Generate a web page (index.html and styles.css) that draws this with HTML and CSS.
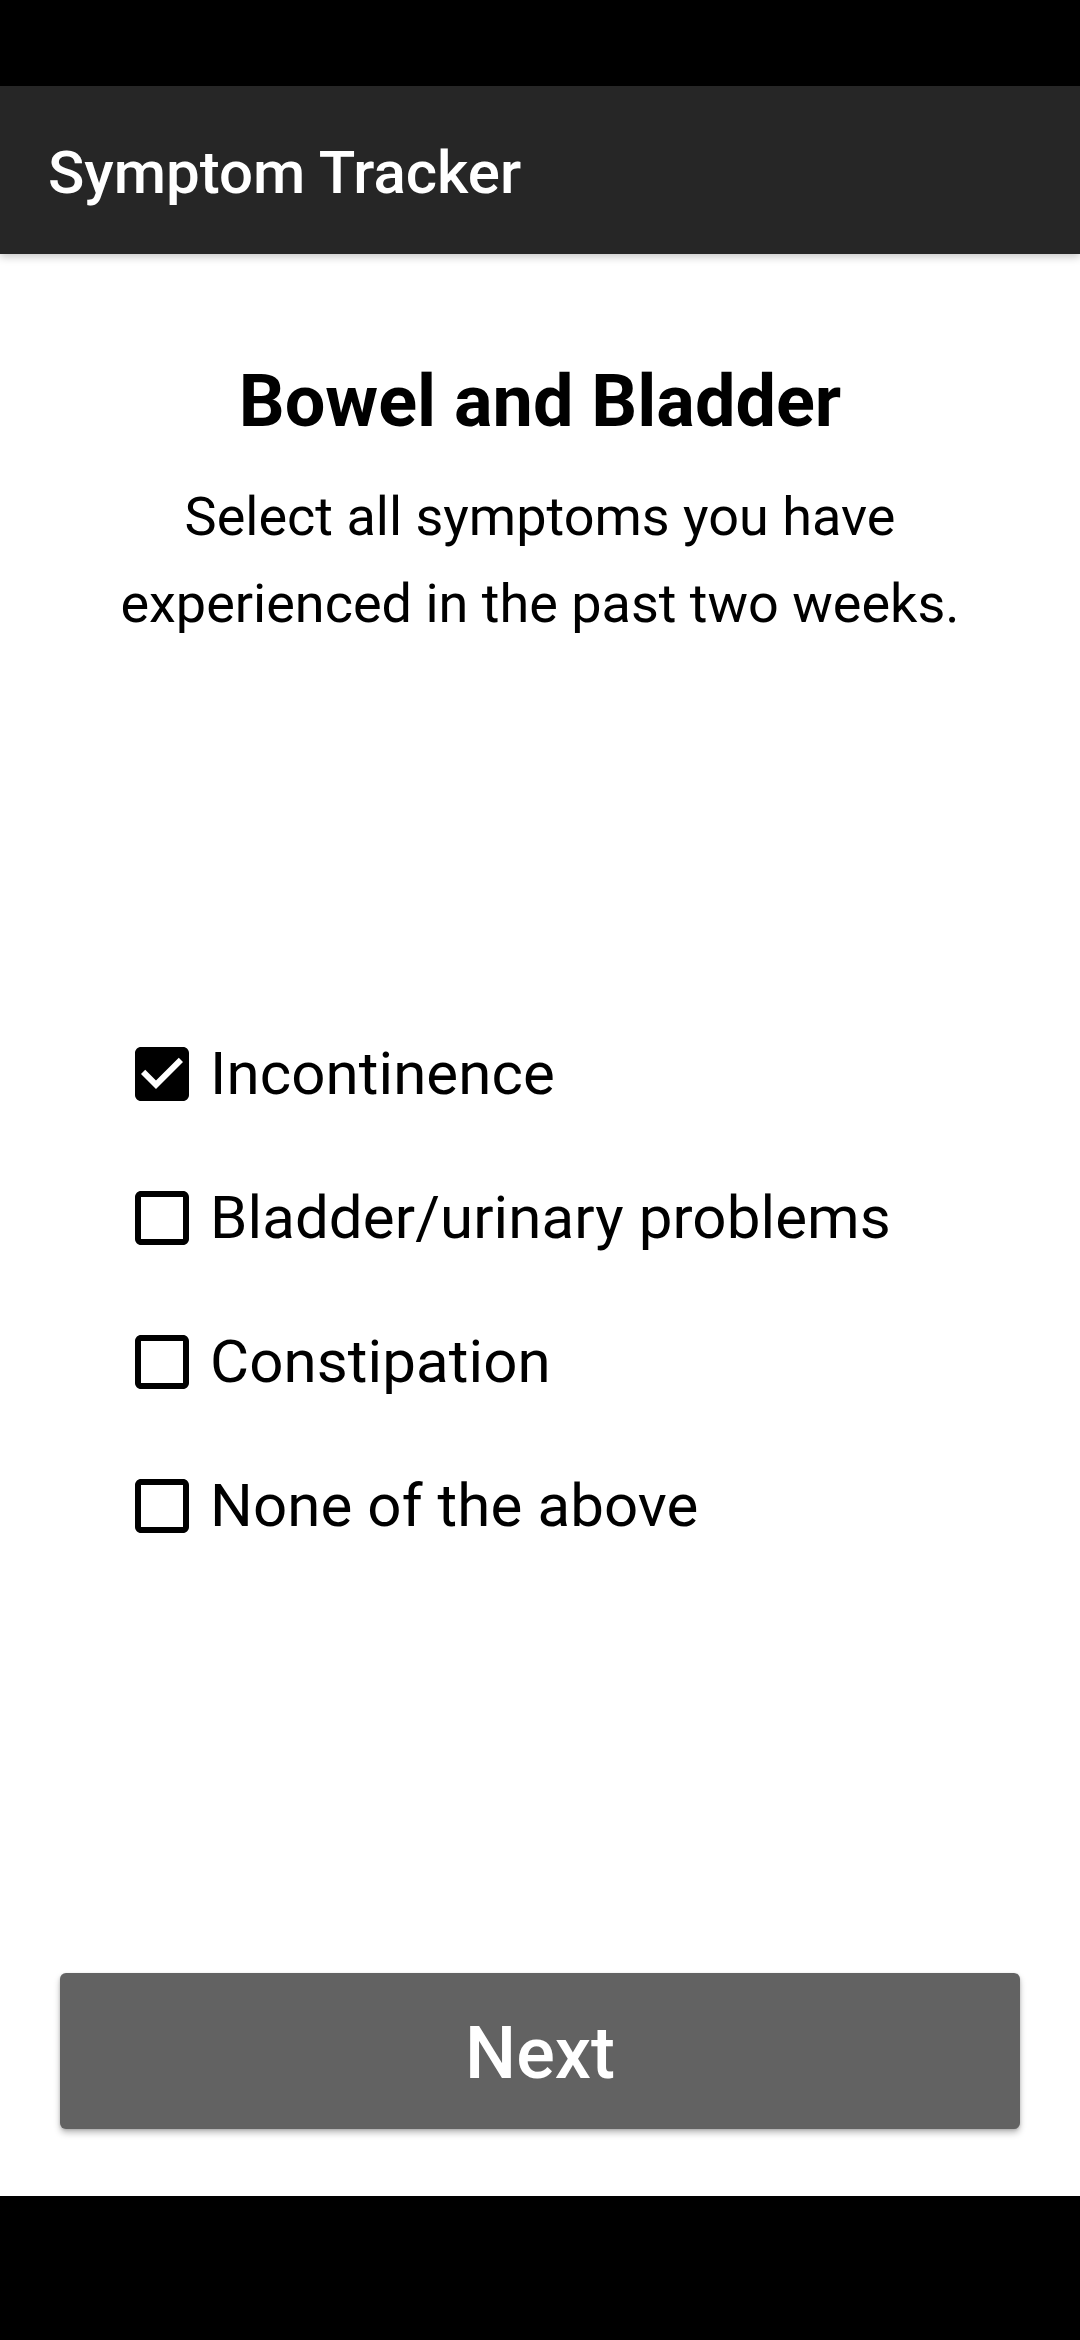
FILE: index.html
```html
<!DOCTYPE html>
<html lang="en">
<head>
<meta charset="utf-8">
<title>Symptom Tracker</title>
<link rel="stylesheet" href="styles.css">
</head>
<body>
<div class="screen">
  <div class="status-bar"></div>
  <header class="app-bar">
    <h1 class="app-title">Symptom Tracker</h1>
  </header>
  <main class="content">
    <h2 class="heading">Bowel and Bladder</h2>
    <p class="subtitle">Select all symptoms you have experienced in the past two weeks.</p>
    <ul class="options">
      <li class="option">
        <svg class="box" viewBox="0 0 24 24" width="72" height="72"><path d="M19 3H5c-1.11 0-2 .9-2 2v14c0 1.1.89 2 2 2h14c1.11 0 2-.9 2-2V5c0-1.1-.89-2-2-2zm-9 14l-5-5 1.41-1.41L10 14.17l7.59-7.59L19 8l-9 9z" fill="#000"/></svg>
        <span class="label">Incontinence</span>
      </li>
      <li class="option">
        <svg class="box" viewBox="0 0 24 24" width="72" height="72"><path d="M19 5v14H5V5h14m0-2H5c-1.1 0-2 .9-2 2v14c0 1.1.9 2 2 2h14c1.1 0 2-.9 2-2V5c0-1.1-.9-2-2-2z" fill="#000"/></svg>
        <span class="label">Bladder/urinary problems</span>
      </li>
      <li class="option">
        <svg class="box" viewBox="0 0 24 24" width="72" height="72"><path d="M19 5v14H5V5h14m0-2H5c-1.1 0-2 .9-2 2v14c0 1.1.9 2 2 2h14c1.1 0 2-.9 2-2V5c0-1.1-.9-2-2-2z" fill="#000"/></svg>
        <span class="label">Constipation</span>
      </li>
      <li class="option">
        <svg class="box" viewBox="0 0 24 24" width="72" height="72"><path d="M19 5v14H5V5h14m0-2H5c-1.1 0-2 .9-2 2v14c0 1.1.9 2 2 2h14c1.1 0 2-.9 2-2V5c0-1.1-.9-2-2-2z" fill="#000"/></svg>
        <span class="label">None of the above</span>
      </li>
    </ul>
    <button class="next-btn" type="button">Next</button>
  </main>
  <div class="nav-bar"></div>
</div>
</body>
</html>
```

FILE: styles.css
```css
html, body {
  margin: 0;
  padding: 0;
  background: #ffffff;
}

body {
  font-family: "Roboto", "Liberation Sans", sans-serif;
  color: #000000;
}

.screen {
  width: 1080px;
  height: 2340px;
  display: flex;
  flex-direction: column;
  overflow: hidden;
}

.status-bar {
  height: 86px;
  background: #000000;
  flex: none;
}

.app-bar {
  height: 168px;
  flex: none;
  background: #262626;
  display: flex;
  align-items: center;
  padding: 5px 48px 0;
  box-sizing: border-box;
  box-shadow: 0 3px 8px rgba(0, 0, 0, 0.22);
  position: relative;
  z-index: 2;
}

.app-title {
  margin: 0;
  font-size: 60px;
  font-weight: 500;
  color: #ffffff;
  line-height: 70px;
}

.content {
  flex: 1;
  display: flex;
  flex-direction: column;
  align-items: stretch;
  padding-top: 105px;
}

.heading {
  margin: 0;
  font-size: 72px;
  font-weight: 700;
  line-height: 86px;
  text-align: center;
}

.subtitle {
  margin: 28px 0 0;
  padding: 0 110px;
  font-size: 54px;
  font-weight: 400;
  line-height: 87px;
  text-align: center;
}

.options {
  list-style: none;
  margin: 355px 0 0;
  padding: 0 0 0 126px;
}

.option {
  height: 144px;
  display: flex;
  align-items: center;
}

.box {
  flex: none;
  display: block;
}

.label {
  margin-left: 12px;
  font-size: 60px;
  line-height: 70px;
  letter-spacing: 0.1px;
}

.next-btn {
  margin: auto 60px 67px;
  height: 156px;
  padding: 5px 0 0;
  border: none;
  border-radius: 6px;
  background: #626262;
  color: #ffffff;
  font-family: "Roboto", "Liberation Sans", sans-serif;
  font-size: 72px;
  font-weight: 500;
  box-shadow: 0 4px 6px rgba(0, 0, 0, 0.25), 0 1px 3px rgba(0, 0, 0, 0.15);
}

.nav-bar {
  height: 144px;
  flex: none;
  background: #000000;
}
```
